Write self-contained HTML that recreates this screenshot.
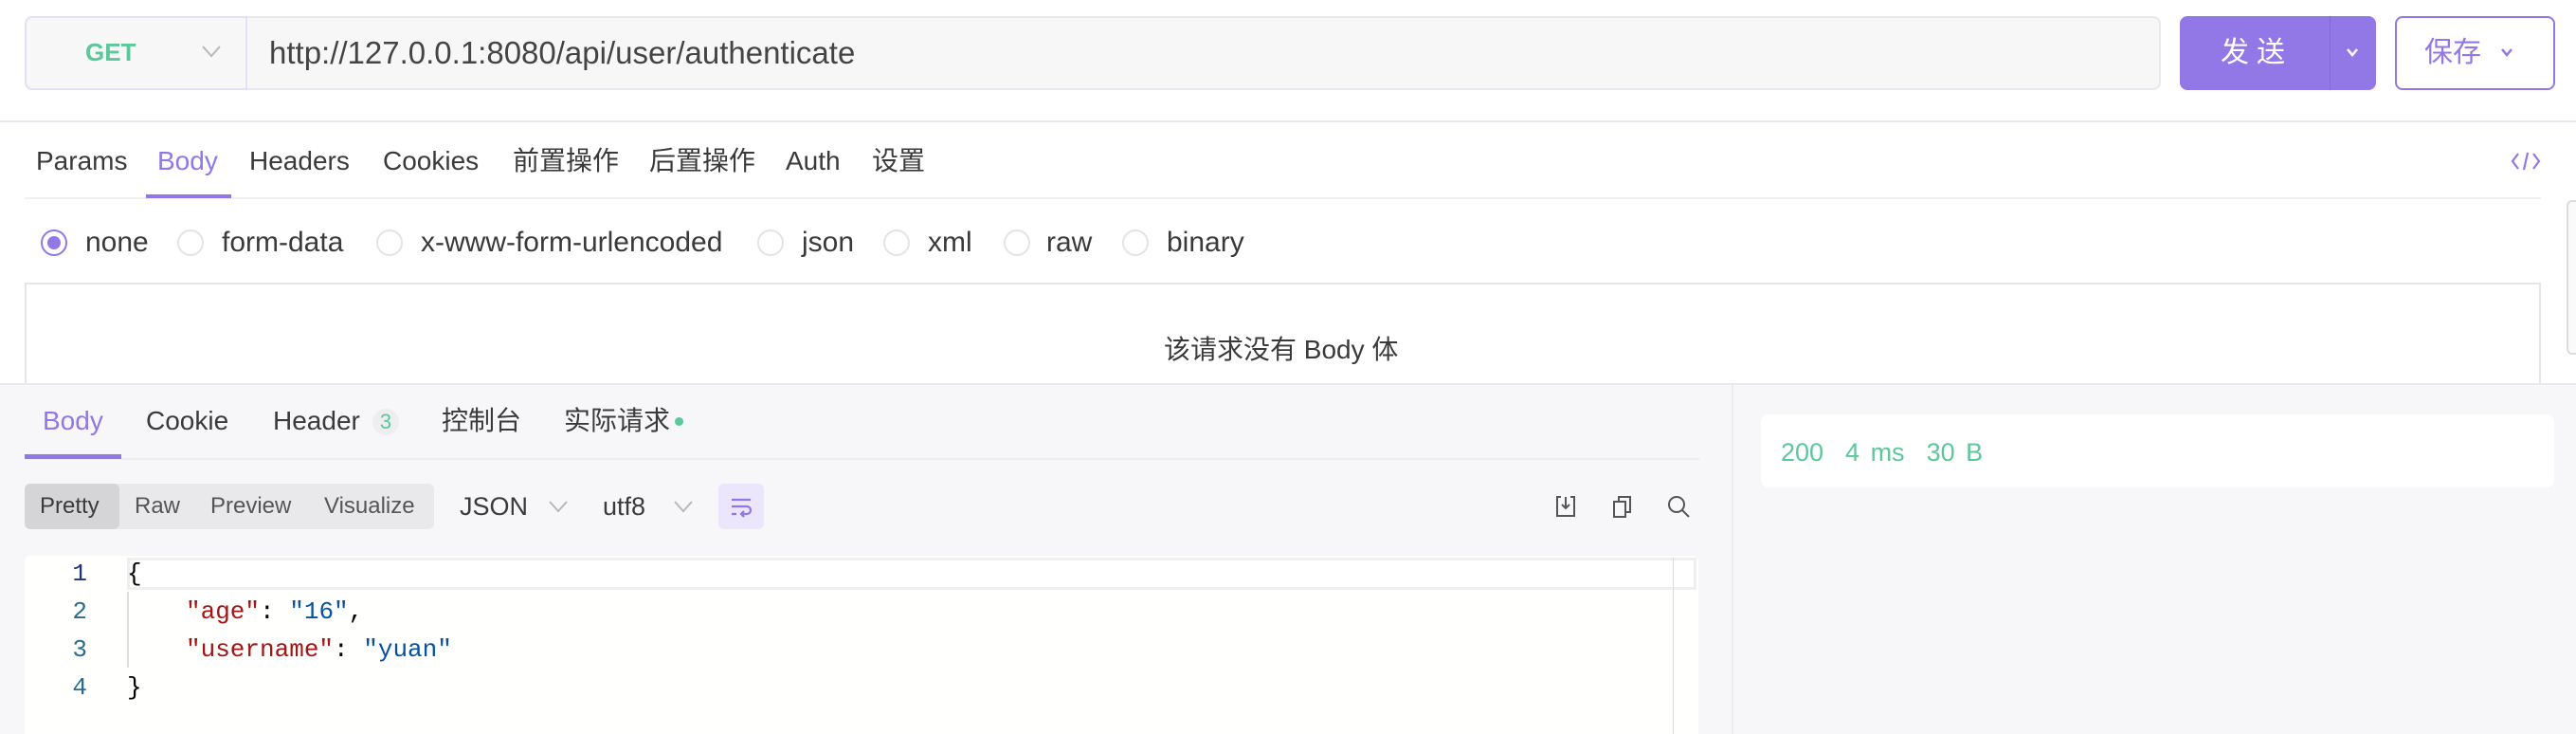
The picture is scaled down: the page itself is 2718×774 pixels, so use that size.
<!DOCTYPE html>
<html><head><meta charset="utf-8"><style>
*{margin:0;padding:0;box-sizing:border-box}
body{width:2718px;height:774px;overflow:hidden;background:#fff;font-family:"Liberation Sans","Noto Sans CJK SC",sans-serif;color:#3a3a3a;position:relative}
.a{position:absolute;white-space:nowrap}
.t{font-size:28px;line-height:34px}
.r{font-size:30px;line-height:34px}
.radio{position:absolute;width:28px;height:28px;border:2px solid #e4e4e8;border-radius:50%;top:242px}
.mono{font-family:"Liberation Mono",monospace;font-size:26px;line-height:40px}
</style></head><body>
<div class="a" style="left:26px;top:17px;width:2254px;height:78px;background:#f7f7f7;border:2px solid #e8e8ee;border-radius:8px"></div>
<div class="a" style="left:26px;top:17px;width:235px;height:78px;border:2px solid #e4e0f8;border-radius:8px 0 0 8px;background:#f7f7f7"></div>
<div class="a" style="left:90px;top:38px;font-size:26px;font-weight:bold;color:#5cc79a;line-height:34px">GET</div>
<svg class="a" style="left:212px;top:46px" width="22" height="16" viewBox="0 0 22 16"><path d="M2 3 L11 13 L20 3" fill="none" stroke="#b8b8b8" stroke-width="2"/></svg>
<div class="a" style="left:284px;top:37px;font-size:33px;line-height:38px;color:#444">http://127.0.0.1:8080/api/user/authenticate</div>
<div class="a" style="left:2300px;top:17px;width:207px;height:78px;background:#9277e6;border-radius:8px"></div>
<div class="a" style="left:2458px;top:17px;width:1px;height:78px;background:#8468d8"></div>
<div class="a" style="left:2343px;top:37px;font-size:30px;color:#fff;letter-spacing:8px;line-height:38px">发送</div>
<svg class="a" style="left:2474px;top:49px" width="16" height="12" viewBox="0 0 16 12"><path d="M3 3 L8 9 L13 3" fill="none" stroke="#fff" stroke-width="2.5"/></svg>
<div class="a" style="left:2527px;top:17px;width:169px;height:78px;border:2px solid #9277e6;border-radius:8px;background:#fff"></div>
<div class="a" style="left:2558px;top:37px;font-size:30px;color:#9277e6;line-height:38px">保存</div>
<svg class="a" style="left:2637px;top:49px" width="16" height="12" viewBox="0 0 16 12"><path d="M3 3 L8 9 L13 3" fill="none" stroke="#9277e6" stroke-width="2.5"/></svg>
<div class="a" style="left:0;top:127px;width:2718px;height:2px;background:#e8e8ee"></div>
<div class="a t" style="left:38px;top:153px">Params</div>
<div class="a t" style="left:166px;top:153px;color:#9277e6">Body</div>
<div class="a t" style="left:263px;top:153px">Headers</div>
<div class="a t" style="left:404px;top:153px">Cookies</div>
<div class="a t" style="left:541px;top:153px">前置操作</div>
<div class="a t" style="left:685px;top:153px">后置操作</div>
<div class="a t" style="left:829px;top:153px">Auth</div>
<div class="a t" style="left:920px;top:153px">设置</div>
<div class="a" style="left:26px;top:208px;width:2655px;height:2px;background:#f0f0f2"></div>
<div class="a" style="left:154px;top:205px;width:90px;height:4px;background:#9277e6"></div>
<svg class="a" style="left:2648px;top:158px" width="34" height="24" viewBox="0 0 34 24"><path d="M9 4 L3 12 L9 20 M25 4 L31 12 L25 20 M19 3 L15 21" fill="none" stroke="#9277e6" stroke-width="2.2"/></svg>
<div class="radio" style="left:43px;border-color:#9277e6"><div style="position:absolute;left:5px;top:5px;width:14px;height:14px;border-radius:50%;background:#9277e6"></div></div>
<div class="a r" style="left:90px;top:239px">none</div>
<div class="radio" style="left:187px"></div><div class="a r" style="left:234px;top:239px">form-data</div>
<div class="radio" style="left:397px"></div><div class="a r" style="left:444px;top:239px">x-www-form-urlencoded</div>
<div class="radio" style="left:799px"></div><div class="a r" style="left:846px;top:239px">json</div>
<div class="radio" style="left:932px"></div><div class="a r" style="left:979px;top:239px">xml</div>
<div class="radio" style="left:1059px"></div><div class="a r" style="left:1104px;top:239px">raw</div>
<div class="radio" style="left:1184px"></div><div class="a r" style="left:1231px;top:239px">binary</div>
<div class="a" style="left:26px;top:298px;width:2655px;height:120px;border:2px solid #e6e6e8;border-bottom:none"></div>
<div class="a t" style="left:1228px;top:352px">该请求没有 Body 体</div>
<div class="a" style="left:2708px;top:211px;width:10px;height:163px;border:2px solid #ddd;border-right:none;border-radius:6px 0 0 6px;background:#fafafa"></div>
<div class="a" style="left:0;top:404px;width:2718px;height:370px;background:#f7f7f9;border-top:2px solid #e8e8ee"></div>
<div class="a" style="left:1827px;top:406px;width:2px;height:368px;background:#ececf0"></div>
<div class="a t" style="left:45px;top:427px;color:#9277e6">Body</div>
<div class="a t" style="left:154px;top:427px">Cookie</div>
<div class="a t" style="left:288px;top:427px">Header</div>
<div class="a" style="left:393px;top:431px;width:28px;height:28px;border-radius:14px;background:#eeeef0;color:#5cc79a;font-size:22px;text-align:center;line-height:28px">3</div>
<div class="a t" style="left:466px;top:427px">控制台</div>
<div class="a t" style="left:595px;top:427px">实际请求</div>
<div class="a" style="left:712px;top:440px;width:9px;height:9px;border-radius:50%;background:#5cc79a"></div>
<div class="a" style="left:26px;top:483px;width:1767px;height:2px;background:#eeeef0"></div>
<div class="a" style="left:26px;top:479px;width:102px;height:5px;background:#9277e6"></div>
<div class="a" style="left:26px;top:510px;width:432px;height:48px;background:#e9e9eb;border-radius:6px"></div>
<div class="a" style="left:26px;top:510px;width:100px;height:48px;background:#d5d5d7;border-radius:6px"></div>
<div class="a" style="left:42px;top:520px;font-size:24px;line-height:28px">Pretty</div>
<div class="a" style="left:142px;top:520px;font-size:24px;line-height:28px;color:#555">Raw</div>
<div class="a" style="left:222px;top:520px;font-size:24px;line-height:28px;color:#555">Preview</div>
<div class="a" style="left:342px;top:520px;font-size:24px;line-height:28px;color:#555">Visualize</div>
<div class="a" style="left:485px;top:517px;font-size:27px;line-height:34px">JSON</div>
<svg class="a" style="left:578px;top:526px" width="22" height="16" viewBox="0 0 22 16"><path d="M2 3 L11 13 L20 3" fill="none" stroke="#b8b8b8" stroke-width="2"/></svg>
<div class="a" style="left:636px;top:517px;font-size:27px;line-height:34px">utf8</div>
<svg class="a" style="left:710px;top:526px" width="22" height="16" viewBox="0 0 22 16"><path d="M2 3 L11 13 L20 3" fill="none" stroke="#b8b8b8" stroke-width="2"/></svg>
<div class="a" style="left:758px;top:510px;width:48px;height:48px;background:#ebe6fb;border-radius:6px"></div>
<svg class="a" style="left:768px;top:520px" width="28" height="28" viewBox="0 0 28 28"><path d="M4 7 H24 M4 14 H20 a4 4 0 0 1 0 8 H14 M17 19 L14 22 L17 25 M4 22 H9" fill="none" stroke="#9277e6" stroke-width="2.2"/></svg>
<svg class="a" style="left:1638px;top:520px" width="28" height="28" viewBox="0 0 28 28"><path d="M9 4 H5 V24 H23 V4 H19 M14 4 V16 M10 12 L14 16 L18 12" fill="none" stroke="#555" stroke-width="2"/></svg>
<svg class="a" style="left:1698px;top:520px" width="28" height="28" viewBox="0 0 28 28"><rect x="5" y="9" width="12" height="16" fill="none" stroke="#555" stroke-width="2"/><path d="M10 9 V4 H22 V20 H17" fill="none" stroke="#555" stroke-width="2"/></svg>
<svg class="a" style="left:1757px;top:520px" width="28" height="28" viewBox="0 0 28 28"><circle cx="12" cy="12" r="8" fill="none" stroke="#555" stroke-width="2"/><path d="M18 18 L25 25" stroke="#555" stroke-width="2"/></svg>
<div class="a" style="left:26px;top:586px;width:1766px;height:188px;background:#fffffe;border-radius:6px 6px 0 0"></div>
<div class="a" style="left:134px;top:588px;width:1656px;height:34px;border:3px solid #efefef;background:#fff"></div>
<div class="a" style="left:1765px;top:588px;width:1px;height:186px;background:#ddd"></div>
<div class="a" style="left:134px;top:624px;width:2px;height:80px;background:#ddd"></div>
<div class="a mono" style="left:70px;top:585px;color:#237;text-align:right;width:22px">1</div>
<div class="a mono" style="left:70px;top:625px;color:#2b6b8b;text-align:right;width:22px">2</div>
<div class="a mono" style="left:70px;top:665px;color:#2b6b8b;text-align:right;width:22px">3</div>
<div class="a mono" style="left:70px;top:705px;color:#2b6b8b;text-align:right;width:22px">4</div>
<div class="a mono" style="left:134px;top:585px;color:#000">{</div>
<div class="a mono" style="left:196px;top:625px"><span style="color:#a31515">"age"</span><span style="color:#000">: </span><span style="color:#0451a5">"16"</span><span style="color:#000">,</span></div>
<div class="a mono" style="left:196px;top:665px"><span style="color:#a31515">"username"</span><span style="color:#000">: </span><span style="color:#0451a5">"yuan"</span></div>
<div class="a mono" style="left:134px;top:705px;color:#000">}</div>
<div class="a" style="left:1858px;top:437px;width:837px;height:77px;background:#fff;border-radius:8px"></div>
<div class="a" style="left:1879px;top:460px;font-size:27px;line-height:34px;color:#5cc79a;word-spacing:4px">200 &nbsp;4 ms &nbsp;30 B</div>
</body></html>
